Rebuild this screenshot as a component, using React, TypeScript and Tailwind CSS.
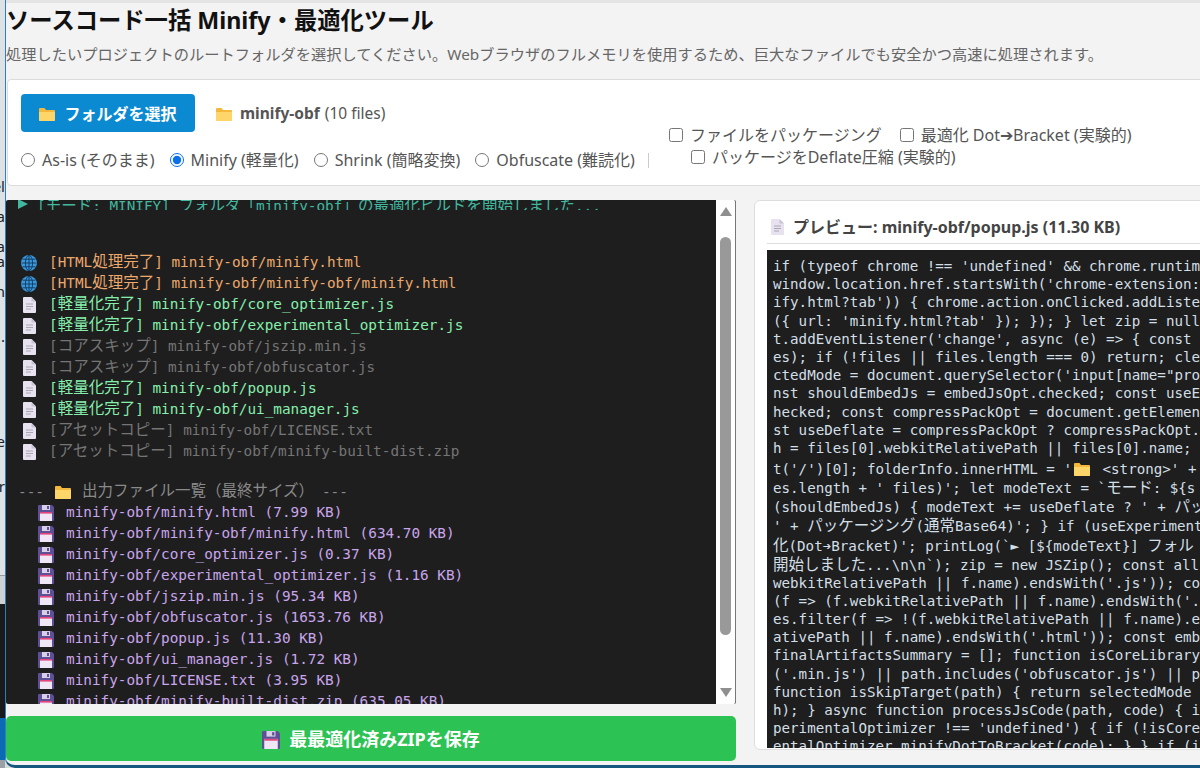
import React from "react";

const UI = "font-['Noto_Sans','Noto_Sans_CJK_JP',sans-serif]";
const MONO = "font-['DejaVu_Sans_Mono','Noto_Sans_CJK_JP',monospace]";

function Folder({ className = "" }: { className?: string }) {
  return (
    <svg viewBox="0 0 16 14" className={className}>
      <path d="M0 2 a1 1 0 0 1 1-1 h4.5 l1.5 2 h8 a1 1 0 0 1 1 1 v9 a1 1 0 0 1-1 1 h-14 a1 1 0 0 1-1-1z" fill="#f4b93c" />
      <path d="M0 5 h16 v8 a1 1 0 0 1-1 1 h-14 a1 1 0 0 1-1-1z" fill="#fdd568" />
    </svg>
  );
}

function Page({ className = "" }: { className?: string }) {
  return (
    <svg viewBox="0 0 13 16" className={className}>
      <path d="M1 0 h7.5 l4.5 4.5 v10.5 a1 1 0 0 1-1 1 h-11 a1 1 0 0 1-1-1 v-14 a1 1 0 0 1 1-1z" fill="#e8e2f0" />
      <path d="M8.5 0 l4.5 4.5 h-4.5z" fill="#c9c2d4" />
      <path d="M3 7 h7 M3 9.5 h7 M3 12 h5" stroke="#a9a6b2" strokeWidth="1" />
    </svg>
  );
}

function Globe() {
  return (
    <svg viewBox="0 0 16 16" className="w-[16px] h-[16px] shrink-0">
      <circle cx="8" cy="8" r="8" fill="#3a97dc" />
      <g stroke="#10395c" strokeWidth="0.9" fill="none">
        <ellipse cx="8" cy="8" rx="3.6" ry="7.6" />
        <path d="M8 0.4 v15.2 M0.6 8 h14.8 M1.6 4.2 h12.8 M1.6 11.8 h12.8" />
      </g>
    </svg>
  );
}

function Floppy({ className = "" }: { className?: string }) {
  return (
    <svg viewBox="0 0 16 16" className={className}>
      <path d="M1 0 h13 l2 2 v13 a1 1 0 0 1-1 1 h-14 a1 1 0 0 1-1-1 v-14 a1 1 0 0 1 1-1z" fill="#5f4f96" />
      <rect x="4" y="0" width="8" height="5" fill="#d6cfe6" />
      <rect x="9" y="1" width="2" height="3" fill="#5f4f96" />
      <rect x="2" y="7" width="12" height="9" fill="#efe6f6" />
      <rect x="2" y="7" width="12" height="1.6" fill="#e0457b" />
    </svg>
  );
}

// Japanese runs sit larger than the Latin monospace, as they do in the original font pairing.
function Mono({ text }: { text: string }) {
  const parts = text.split(/([\u3000-\u30ff\u4e00-\u9fff\uff00-\uffef]+)/);
  return (
    <>
      {parts.map((p, i) =>
        i % 2 === 1 ? (
          <span key={i} className="text-[15.5px] leading-[1]">
            {p}
          </span>
        ) : (
          <span key={i}>{p}</span>
        )
      )}
    </>
  );
}

const logs: { icon: "globe" | "page"; tag: string; file: string; color: string }[] = [
  { icon: "globe", tag: "[HTML処理完了]", file: "minify-obf/minify.html", color: "text-[#eda86c]" },
  { icon: "globe", tag: "[HTML処理完了]", file: "minify-obf/minify-obf/minify.html", color: "text-[#eda86c]" },
  { icon: "page", tag: "[軽量化完了]", file: "minify-obf/core_optimizer.js", color: "text-[#86efac]" },
  { icon: "page", tag: "[軽量化完了]", file: "minify-obf/experimental_optimizer.js", color: "text-[#86efac]" },
  { icon: "page", tag: "[コアスキップ]", file: "minify-obf/jszip.min.js", color: "text-[#757575]" },
  { icon: "page", tag: "[コアスキップ]", file: "minify-obf/obfuscator.js", color: "text-[#757575]" },
  { icon: "page", tag: "[軽量化完了]", file: "minify-obf/popup.js", color: "text-[#86efac]" },
  { icon: "page", tag: "[軽量化完了]", file: "minify-obf/ui_manager.js", color: "text-[#86efac]" },
  { icon: "page", tag: "[アセットコピー]", file: "minify-obf/LICENSE.txt", color: "text-[#757575]" },
  { icon: "page", tag: "[アセットコピー]", file: "minify-obf/minify-built-dist.zip", color: "text-[#757575]" },
];

const outputs = [
  "minify-obf/minify.html (7.99 KB)",
  "minify-obf/minify-obf/minify.html (634.70 KB)",
  "minify-obf/core_optimizer.js (0.37 KB)",
  "minify-obf/experimental_optimizer.js (1.16 KB)",
  "minify-obf/jszip.min.js (95.34 KB)",
  "minify-obf/obfuscator.js (1653.76 KB)",
  "minify-obf/popup.js (11.30 KB)",
  "minify-obf/ui_manager.js (1.72 KB)",
  "minify-obf/LICENSE.txt (3.95 KB)",
  "minify-obf/minify-built-dist.zip (635.05 KB)",
];

const code: { t: string; c?: string }[] = [
  { t: "if (typeof chrome !== 'undefined' && chrome.runtime" },
  { t: "window.location.href.startsWith('chrome-extension:" },
  { t: "ify.html?tab')) { chrome.action.onClicked.addListe" },
  { t: "({ url: 'minify.html?tab' }); }); } let zip = null" },
  { t: "t.addEventListener('change', async (e) => { const " },
  { t: "es); if (!files || files.length === 0) return; cle" },
  { t: "ctedMode = document.querySelector('input[name=\"pro" },
  { t: "nst shouldEmbedJs = embedJsOpt.checked; const useE" },
  { t: "hecked; const compressPackOpt = document.getElemen" },
  { t: "st useDeflate = compressPackOpt ? compressPackOpt." },
  { t: "h = files[0].webkitRelativePath || files[0].name; " },
  { t: "t('/')[0]; folderInfo.innerHTML = '@@ <strong>' + ", c: "mt-[3px]" },
  { t: "es.length + ' files)'; let modeText = `モード: ${s", c: "mt-[0.5px]" },
  { t: "(shouldEmbedJs) { modeText += useDeflate ? ' + パッ", c: "mt-[1px]" },
  { t: "' + パッケージング(通常Base64)'; } if (useExperiment", c: "mt-[1px]" },
  { t: "化(Dot➔Bracket)'; printLog(`► [${modeText}] フォル", c: "mt-[2px]" },
  { t: "開始しました...\\n\\n`); zip = new JSZip(); const all" },
  { t: "webkitRelativePath || f.name).endsWith('.js')); co" },
  { t: "(f => (f.webkitRelativePath || f.name).endsWith('." },
  { t: "es.filter(f => !(f.webkitRelativePath || f.name).e" },
  { t: "ativePath || f.name).endsWith('.html')); const emb" },
  { t: "finalArtifactsSummary = []; function isCoreLibrary" },
  { t: "('.min.js') || path.includes('obfuscator.js') || p" },
  { t: "function isSkipTarget(path) { return selectedMode " },
  { t: "h); } async function processJsCode(path, code) { i" },
  { t: "perimentalOptimizer !== 'undefined') { if (!isCore" },
  { t: "entalOptimizer.minifyDotToBracket(code); } } if (i" },
];

const sliverRows = ["el", "", "a", "", "a", "a", "", "n", "", "", ".", "", "", "", "", "", "", "e", "", "", "r"];

function Radio({ label, checked }: { label: string; checked?: boolean }) {
  return (
    <label className="flex items-center gap-[7px]">
      <input type="radio" name="mode" defaultChecked={checked} className="w-[14px] h-[14px] m-0 accent-[#0b6fe8]" />
      <span>{label}</span>
    </label>
  );
}

function Check({ label }: { label: string }) {
  return (
    <label className="flex items-center gap-[7px]">
      <input type="checkbox" className="w-[14px] h-[14px] m-0" />
      <span>{label}</span>
    </label>
  );
}

export default function App() {
  return (
    <div className={`${UI} w-[1200px] h-[768px] overflow-hidden flex bg-[#d9dcde]`}>
      {/* Sliver of the window behind */}
      <div className="w-[5px] shrink-0 flex flex-col h-full overflow-hidden">
        <div className="h-[179px] shrink-0 bg-[#dfe2e4]" />
        <div className="h-[396px] shrink-0 bg-[#dfe2e4] overflow-hidden text-[15px] text-[#222]">
          {sliverRows.map((s, i) => (
            <div key={i} className="h-[15px] leading-[15px] flex justify-end whitespace-nowrap">
              {s}
            </div>
          ))}
        </div>
        <div className="h-[29px] shrink-0 bg-[#cfd0d1] border-t border-[#9a9a9a]" />
        <div className="h-[114px] shrink-0 bg-[#1a1a1a]" />
        <div className="flex-1 bg-[#0a6ab4]" />
        <div className="h-[8px] shrink-0 bg-[#9aa0a4]" />
      </div>

      {/* Main window */}
      <div className="w-[1215px] shrink-0 h-full bg-[#f3f3f3] border-l-[1px] border-b-[3px] border-[#2f7fc0] border-b-[#15577f] rounded-bl-[10px] overflow-hidden flex flex-col">
        {/* Title */}
        <div className="h-[3px] shrink-0 bg-[#e4e4e4]" />
        <div className="h-[76px] shrink-0">
          <h1 className="text-[23.3px] leading-[32px] mt-[1px] font-bold text-[#111] whitespace-nowrap">
            ソースコード一括 Minify・最適化ツール
          </h1>
          <p className="text-[15.25px] leading-[22px] mt-[7px] text-[#666] whitespace-nowrap">
            処理したいプロジェクトのルートフォルダを選択してください。Webブラウザのフルメモリを使用するため、巨大なファイルでも安全かつ高速に処理されます。
          </p>
        </div>

        {/* Controls */}
        <div className="h-[107px] shrink-0 ml-px bg-white border border-[#dcdcdc] rounded-l-[4px] flex text-[16px] text-[#555]">
          <div className="w-[640px] shrink-0 pl-[13px] pt-[14px] flex flex-col gap-[16px]">
            <div className="flex items-center">
              <button className="w-[174px] h-[38px] pt-px rounded-[4px] bg-[#0b8ad2] text-white font-bold text-[16px] flex items-center justify-center gap-[9px]">
                <Folder className="w-[16px] h-[14px]" />
                フォルダを選択
              </button>
              <div className="ml-[21px] pt-px flex items-center text-[15.5px]">
                <Folder className="w-[16px] h-[14px] mr-[8px]" />
                <strong>minify-obf</strong>
                <span className="ml-[5px]">(10 files)</span>
              </div>
            </div>
            <div className="flex items-center gap-[15px] whitespace-nowrap">
              <Radio label="As-is (そのまま)" />
              <Radio label="Minify (軽量化)" checked />
              <Radio label="Shrink (簡略変換)" />
              <Radio label="Obfuscate (難読化)" />
            </div>
          </div>
          <div className="w-px h-[15px] mt-[73px] bg-[#cccccc] shrink-0" />
          <div className="ml-[20px] pt-[45px] flex flex-col gap-[2px] leading-[20px] whitespace-nowrap">
            <div className="flex gap-[18px]">
              <Check label="ファイルをパッケージング" />
              <Check label="最適化 Dot➔Bracket (実験的)" />
            </div>
            <div className="pl-[22px]">
              <Check label="パッケージをDeflate圧縮 (実験的)" />
            </div>
          </div>
        </div>

        {/* Body */}
        <div className="flex-1 min-h-0 flex pt-[14px]">
          {/* Left column */}
          <div className="w-[730px] shrink-0 flex flex-col pb-[4px]">
            <div className="h-[504px] shrink-0 bg-[#1e1e1e] rounded-[2px] overflow-hidden flex border-r border-[#777]">
              <div className={`${MONO} flex-1 min-w-0 overflow-hidden text-[14.35px] leading-[21px] whitespace-nowrap`}>
                <div className="h-[10px] mb-[42px] overflow-hidden flex items-end pl-[12px] text-[#42b89e]">
                  <svg viewBox="0 0 10 10" className="w-[10px] h-[10px] shrink-0 mr-[9px] -translate-y-[1px]">
                    <path d="M0 0 L10 5 L0 10z" fill="#42b89e" />
                  </svg>
                  <div className="translate-y-[7px]">
                    <Mono text="[モード: MINIFY] フォルダ「minify-obf」の最適化ビルドを開始しました..." />
                  </div>
                </div>
                {logs.map((l, i) => (
                  <div key={i} className={`h-[21px] pl-[15px] flex items-center ${l.color}`}>
                    {l.icon === "globe" ? <Globe /> : <Page className="w-[13px] h-[16px] shrink-0 mx-[1.5px]" />}
                    <span className="ml-[12px]">
                      <Mono text={l.tag} /> <span>{l.file}</span>
                    </span>
                  </div>
                ))}
                <div className="h-[18px] mt-[21px] pl-[12px] flex items-center text-[#8a8a8a]">
                  <span>---</span>
                  <Folder className="w-[16px] h-[14px] ml-[11px] mr-[11px]" />
                  <Mono text="出力ファイル一覧（最終サイズ）" />
                  <span className="ml-[8px]">---</span>
                </div>
                <div className="h-[1px]" />
                {outputs.map((o, i) => (
                  <div key={i} className="h-[21px] pl-[32px] flex items-center text-[#c9a5ec]">
                    <Floppy className="w-[16px] h-[16px] shrink-0" />
                    <span className="ml-[12px]">{o}</span>
                  </div>
                ))}
              </div>
              {/* Scrollbar */}
              <div className="w-[19px] shrink-0 bg-white flex flex-col items-center py-[7px]">
                <svg viewBox="0 0 12 9" className="w-[12px] h-[9px] shrink-0">
                  <path d="M6 0 L12 9 H0z" fill="#8f8f8f" />
                </svg>
                <div className="w-[11px] h-[398px] mt-[21px] rounded-full bg-[#999999] shrink-0" />
                <div className="flex-1" />
                <svg viewBox="0 0 12 9" className="w-[12px] h-[9px] shrink-0">
                  <path d="M0 0 H12 L6 9z" fill="#8f8f8f" />
                </svg>
              </div>
            </div>
            <button className="mt-[12px] h-[45px] pt-[2px] shrink-0 rounded-[5px] bg-[#2cc254] text-white font-bold text-[18px] flex items-center justify-center gap-[9px]">
              <Floppy className="w-[18px] h-[18px]" />
              最最適化済みZIPを保存
            </button>
          </div>

          {/* Preview */}
          <div className="ml-[18px] w-[470px] shrink-0 h-[550px] bg-white border border-[#dedede] rounded-[6px] px-[12px] pt-[12px] flex flex-col">
            <div className="h-[31px] shrink-0 border-b border-[#dddddd] flex items-center text-[16px] font-bold text-[#444] whitespace-nowrap pb-[3px]">
              <Page className="w-[13px] h-[16px] ml-[4px] mr-[9px] shrink-0" />
              プレビュー: minify-obf/popup.js (11.30 KB)
            </div>
            <div className={`${MONO} mt-[6px] h-[498px] shrink-0 bg-[#1e1e1e] overflow-hidden pt-[7px] pl-[6px] text-[14.2px] leading-[18.2px] text-[#d3dfe6] whitespace-nowrap`}>
              {code.map((line, i) => {
                const [a, b] = line.t.split("@@");
                return (
                  <div key={i} className={`h-[18.2px] flex items-center whitespace-pre ${line.c ?? ""}`}>
                    <span className="whitespace-pre">
                      <Mono text={a} />
                    </span>
                    {b !== undefined && (
                      <>
                        <Folder className="w-[16px] h-[14px] ml-[2px] mr-[4px] shrink-0" />
                        <span className="whitespace-pre">{b}</span>
                      </>
                    )}
                  </div>
                );
              })}
            </div>
          </div>
        </div>
      </div>
    </div>
  );
}
